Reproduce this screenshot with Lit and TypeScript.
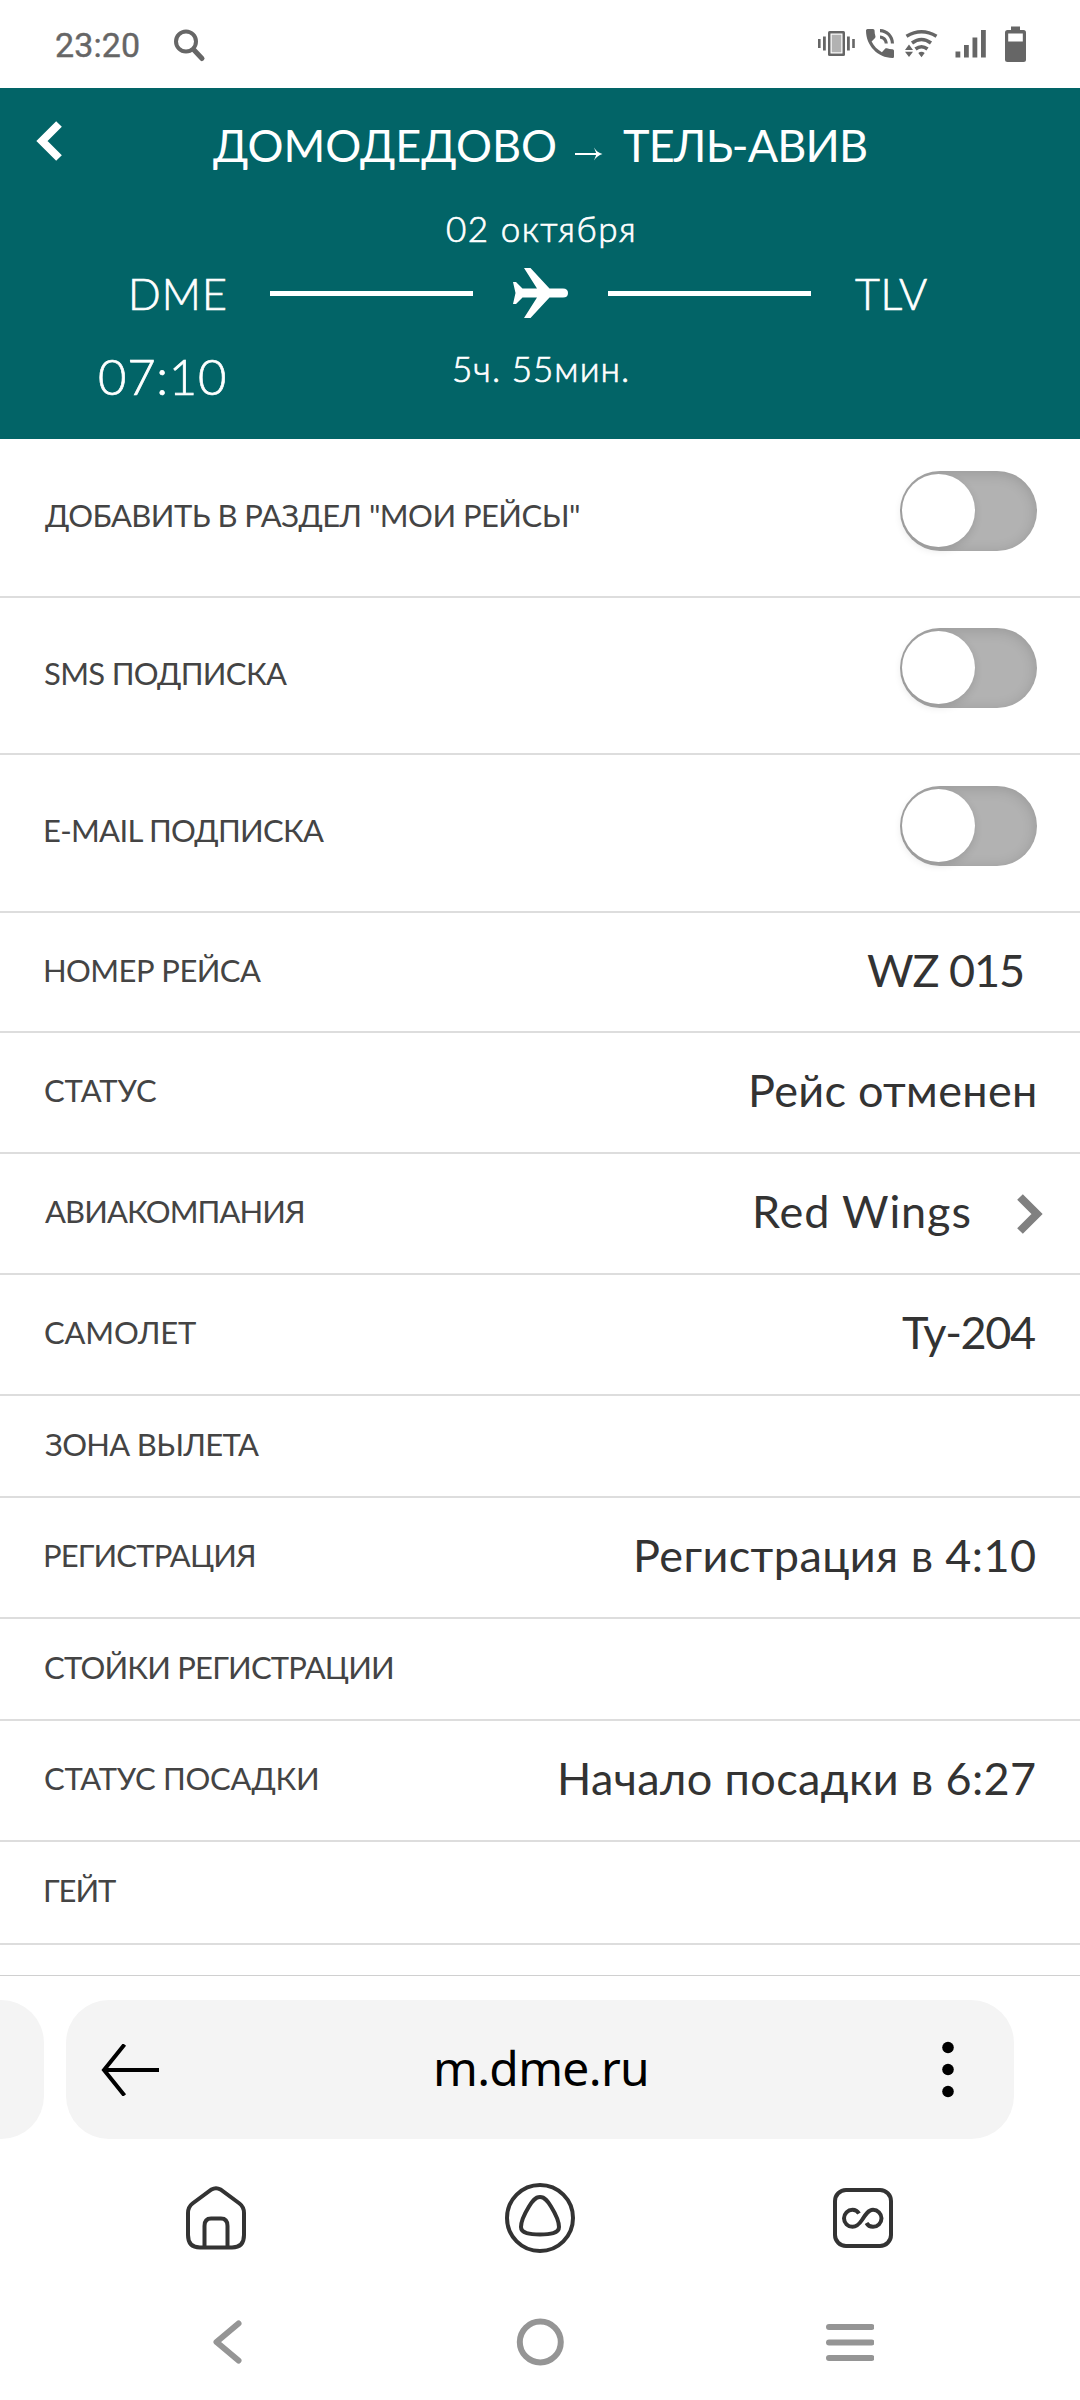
import { LitElement, html, css, svg, nothing } from "lit";
import { customElement, property } from "lit/decorators.js";

/** A single line of text whose letter spacing is tuned to span an exact width. */
@customElement("fit-text")
export class FitText extends LitElement {
  @property({ type: String }) text = "";
  @property({ type: Number }) span = 0;

  static styles = css`
    :host {
      display: block;
      flex: none;
      white-space: pre;
    }
    .line {
      display: block;
    }
  `;

  firstUpdated() {
    const line = this.renderRoot.querySelector<HTMLElement>(".line")!;
    const cs = getComputedStyle(this);
    const ctx = document.createElement("canvas").getContext("2d")!;
    ctx.font = `${cs.fontWeight} ${cs.fontSize} ${cs.fontFamily}`;
    const m = ctx.measureText(this.text);
    const ink = m.actualBoundingBoxLeft + m.actualBoundingBoxRight;
    line.style.letterSpacing = `${(this.span - ink) / (this.text.length - 1)}px`;
    line.style.marginLeft = `${m.actualBoundingBoxLeft}px`;
    this.style.width = `${this.span}px`;
  }

  render() {
    return html`<span class="line">${this.text}</span>`;
  }
}

const chevron = (dir: "left" | "right") => html`
  <svg width="26" height="40" viewBox="0 0 26 40" fill="none" stroke="currentColor" stroke-width="8">
    ${dir === "left" ? svg`<path d="M23 3 L6 20 L23 37" />` : svg`<path d="M3 3 L20 20 L3 37" />`}
  </svg>
`;

interface Row {
  label: string;
  labelSpan: number;
  value?: string;
  valueSpan?: number;
  kind: "toggle" | "tall" | "short";
  height: number;
  inset?: boolean;
  link?: boolean;
}

const ROWS: Row[] = [
  { label: 'ДОБАВИТЬ В РАЗДЕЛ "МОИ РЕЙСЫ"', labelSpan: 534, kind: "toggle", height: 159 },
  { label: "SMS ПОДПИСКА", labelSpan: 242, kind: "toggle", height: 157 },
  { label: "E-MAIL ПОДПИСКА", labelSpan: 280, kind: "toggle", height: 158 },
  { label: "НОМЕР РЕЙСА", labelSpan: 216, value: "WZ 015", valueSpan: 156, kind: "tall", height: 120, inset: true },
  { label: "СТАТУС", labelSpan: 112, value: "Рейс отменен", valueSpan: 283, kind: "tall", height: 121 },
  { label: "АВИАКОМПАНИЯ", labelSpan: 258, value: "Red Wings", valueSpan: 214, kind: "tall", height: 121, link: true },
  { label: "САМОЛЕТ", labelSpan: 151, value: "Ту-204", valueSpan: 133, kind: "tall", height: 121 },
  { label: "ЗОНА ВЫЛЕТА", labelSpan: 214, kind: "short", height: 102 },
  { label: "РЕГИСТРАЦИЯ", labelSpan: 209, value: "Регистрация в 4:10", valueSpan: 398, kind: "tall", height: 121 },
  { label: "СТОЙКИ РЕГИСТРАЦИИ", labelSpan: 347, kind: "short", height: 102 },
  { label: "СТАТУС ПОСАДКИ", labelSpan: 272, value: "Начало посадки в 6:27", valueSpan: 474, kind: "tall", height: 121 },
  { label: "ГЕЙТ", labelSpan: 71, kind: "short", height: 103 },
];

@customElement("app-root")
export class AppRoot extends LitElement {
  static styles = css`
    :host {
      display: flex;
      flex-direction: column;
      width: 1080px;
      height: 2400px;
      overflow: hidden;
      background: #fff;
      font-family: Lato, "Open Sans", sans-serif;
    }
    svg {
      display: block;
      flex: none;
    }

    .status {
      display: flex;
      box-sizing: border-box;
      height: 88px;
      padding: 0 54px 0 56px;
      color: #666;
    }
    .clock {
      font: 400 34px/40px Roboto, sans-serif;
      -webkit-text-stroke: 0.4px #666;
      margin-top: 25px;
    }
    .search {
      margin: 29px auto 0 35px;
    }
    .vibrate { margin: 31px 11px 0 0; }
    .phone { margin: 29px 11px 0 0; }
    .wifi { margin: 29px 16px 0 0; }
    .signal { margin: 29px 18px 0 0; }
    .battery { margin-top: 26px; }

    .flight {
      display: flex;
      flex-direction: column;
      box-sizing: border-box;
      height: 351px;
      background: #026467;
      color: #fff;
    }
    .topline {
      display: flex;
      height: 122px;
    }
    .back {
      margin: 33px 0 0 36px;
    }
    .title {
      display: flex;
      margin: 35px 0 0 151px;
      font-size: 45px;
      line-height: 44px;
    }
    .arrow {
      margin: 24px 20px 0 20px;
    }
    .small,
    .code,
    .depart {
      font-weight: 300;
      -webkit-text-stroke: 0.7px #fff;
    }
    .small {
      font-size: 35px;
      line-height: 36px;
      align-self: center;
    }
    .route {
      display: grid;
      grid-template-columns: 225px 45px 541px 44px auto;
      height: 69px;
      font-size: 43px;
      line-height: 44px;
    }
    .code {
      margin-top: 26px;
    }
    .from { justify-self: end; }
    .to { grid-column: 5; }
    .path {
      grid-column: 3;
      display: flex;
      justify-content: space-between;
      align-items: flex-start;
    }
    .rule {
      width: 203px;
      height: 5px;
      margin-top: 45px;
      background: #fff;
    }
    .plane {
      margin-top: 22px;
    }
    .times {
      display: grid;
      grid-template-columns: 225px 229px auto;
      height: 86px;
    }
    .depart {
      justify-self: end;
      font-size: 49px;
      line-height: 48px;
      margin-top: 37px;
    }
    .duration {
      grid-column: 3;
      align-self: start;
      margin-top: 35px;
    }

    .rows {
      height: 1536px;
      overflow: hidden;
      flex: none;
    }
    .row {
      display: flex;
      justify-content: space-between;
      align-items: flex-start;
      box-sizing: border-box;
      border-bottom: 2px solid #ddd;
      padding: 0 45px 0 45px;
    }
    .label {
      color: #444;
      font-size: 31px;
      line-height: 30px;
    }
    .toggle-row .label { margin-top: 60px; }
    .tall-row .label { margin-top: 42px; }
    .short-row .label { margin-top: 33px; }
    .value {
      color: #333;
      font-size: 45px;
      line-height: 44px;
      margin-top: 35px;
    }
    .inset { margin-right: 12px; }
    .linked {
      display: flex;
      margin-right: -8px;
      color: #808080;
    }
    .linked svg { margin: 40px 0 0 47px; }

    .toggle {
      box-sizing: border-box;
      width: 137px;
      height: 80px;
      margin: 31px -2px 0 0;
      padding: 3px 2px;
      border-radius: 40px;
      background: #b2b2b2;
      box-shadow: inset 0 2px 14px rgba(0, 0, 0, 0.15);
    }
    .row:nth-child(1) .label { margin-top: 61px; }
    .row:nth-child(1) .toggle { margin-top: 32px; }
    .row:nth-child(2) .toggle { margin-top: 30px; }
    .knob {
      width: 73px;
      height: 73px;
      border-radius: 50%;
      background: #fff;
      box-shadow: 0 3px 9px rgba(0, 0, 0, 0.12);
    }

    .browser {
      display: flex;
      gap: 22px;
      box-sizing: border-box;
      height: 164px;
      flex: none;
      padding-top: 24px;
      border-top: 1px solid #d0d0d0;
    }
    .prev {
      width: 44px;
      background: #f4f4f4;
      border-radius: 0 43px 43px 0;
    }
    .address {
      display: flex;
      box-sizing: border-box;
      width: 948px;
      padding: 0 60px 0 35px;
      background: #f4f4f4;
      border-radius: 43px;
      align-items: center;
      color: #000;
    }
    .host {
      font: 400 48px/60px "Noto Sans", sans-serif;
      margin: -4px 0 0 278px;
    }
    .dots { margin-left: auto; }
    .tools {
      display: flex;
      justify-content: space-between;
      align-items: center;
      height: 158px;
      padding: 0 187px 0 186px;
    }
    .nav {
      display: flex;
      align-items: center;
      height: 90px;
      padding-left: 212px;
    }
    .nav-home { margin: 0 260px 0 274px; }
  `;

  private statusBar() {
    return html`
      <div class="status">
        <fit-text class="clock" text="23:20" span="83"></fit-text>
        <svg class="search" width="32" height="34" viewBox="0 0 32 34" fill="none" stroke="#666" stroke-linecap="round">
          <circle cx="12" cy="12.5" r="10" stroke-width="4" />
          <path d="M20 21 L28 29.5" stroke-width="5" />
        </svg>
        <svg class="vibrate" width="37" height="25" viewBox="0 0 37 25" fill="#666">
          <rect x="0" y="8" width="2.6" height="9" />
          <rect x="5" y="5.5" width="2.8" height="14" />
          <rect x="29" y="5.5" width="2.8" height="14" />
          <rect x="34.2" y="8" width="2.6" height="9" />
          <rect x="10" y="0" width="17" height="25" rx="1.5" />
          <rect x="12.5" y="2.5" width="12" height="20" fill="#fff" />
          <rect x="13.7" y="3.7" width="9.6" height="17.6" fill="#b2b2b2" />
        </svg>
        <svg class="phone" width="28" height="29" viewBox="3 3 18 18" preserveAspectRatio="none" fill="#666">
          <path d="M20 15.5c-1.25 0-2.45-.2-3.57-.57-.35-.11-.74-.03-1.02.24l-2.2 2.2c-2.83-1.44-5.15-3.75-6.59-6.58l2.2-2.21c.28-.27.36-.66.25-1.01C8.7 6.45 8.5 5.25 8.5 4c0-.55-.45-1-1-1H4c-.55 0-1 .45-1 1 0 9.39 7.61 17 17 17 .55 0 1-.45 1-1v-3.5c0-.55-.45-1-1-1zM19 12h2c0-4.97-4.03-9-9-9v2c3.87 0 7 3.13 7 7zm-4 0h2c0-2.76-2.24-5-5-5v2c1.66 0 3 1.34 3 3z" />
        </svg>
        <svg class="wifi" width="34" height="29" viewBox="0 0 34 29" fill="#666">
          <g fill="none" stroke="#666" stroke-width="3.6">
            <path d="M1.5 7.2 Q16.5 -1.6 31.5 7.2" />
            <path d="M7 14 Q16.5 7 26 14" />
            <path d="M10.5 20 Q16.5 15.5 22.5 20" />
          </g>
          <path d="M4 15.5 L8 21 H0 Z M0 22.8 H8 L4 28 Z M13.3 24 Q16.5 21.5 19.7 24 L16.5 28.3 Z" />
        </svg>
        <svg class="signal" width="32" height="30" viewBox="0 0 32 30" fill="#666">
          <rect x="0.5" y="22.5" width="4.8" height="6" />
          <rect x="9" y="16" width="4.8" height="12.5" />
          <rect x="17.5" y="8.5" width="4.8" height="20" />
          <rect x="26" y="1" width="4.8" height="27.5" />
        </svg>
        <svg class="battery" width="21" height="36" viewBox="0 0 21 36">
          <rect x="6" y="0.5" width="9" height="6" fill="#666" />
          <rect x="0" y="4" width="21" height="32" rx="2.5" fill="#666" />
          <rect x="3.2" y="7.5" width="14.6" height="8" fill="#fff" />
        </svg>
      </div>
    `;
  }

  private flightHeader() {
    return html`
      <div class="flight">
        <div class="topline">
          <div class="back">${chevron("left")}</div>
          <div class="title">
            <fit-text text="ДОМОДЕДОВО" span="342"></fit-text>
            <svg class="arrow" width="28" height="14" viewBox="0 0 28 14">
              <path d="M0 7 H25" stroke="#fff" stroke-width="2" />
              <path d="M19 0.5 Q22 5.5 27.5 7 Q22 8.5 19 13.5 L21.5 7 Z" fill="#fff" />
            </svg>
            <fit-text text="ТЕЛЬ-АВИВ" span="243"></fit-text>
          </div>
        </div>
        <fit-text class="small date" text="02 октября" span="186"></fit-text>
        <div class="route">
          <fit-text class="code from" text="DME" span="93"></fit-text>
          <div class="path">
            <div class="rule"></div>
            <svg class="plane" width="55" height="50" viewBox="0 0 55 50" fill="#fff">
              <path d="M0 14 H3 L9.5 20.5 H24 L11 0 H17.5 L36.5 20.5 H50 Q55 20.5 55 25 Q55 29.5 50 29.5 H36.5 L17.5 50 H11 L24 29.5 H9.5 L3 36 H0 L2.5 25 Z" />
            </svg>
            <div class="rule"></div>
          </div>
          <fit-text class="code to" text="TLV" span="72"></fit-text>
        </div>
        <div class="times">
          <fit-text class="depart" text="07:10" span="126"></fit-text>
          <fit-text class="small duration" text="5ч. 55мин." span="173"></fit-text>
        </div>
      </div>
    `;
  }

  private row(r: Row) {
    const value = r.value
      ? html`<fit-text class="value ${r.inset ? "inset" : ""}" text=${r.value} span=${r.valueSpan ?? 0}></fit-text>`
      : nothing;
    return html`
      <div class="row ${r.kind}-row" style="height:${r.height}px">
        <fit-text class="label" text=${r.label} span=${r.labelSpan}></fit-text>
        ${r.kind === "toggle" ? html`<div class="toggle"><div class="knob"></div></div>` : nothing}
        ${r.link ? html`<div class="linked">${value}${chevron("right")}</div>` : value}
      </div>
    `;
  }

  private browserBar() {
    return html`
      <div class="browser">
        <div class="prev"></div>
        <div class="address">
          <svg width="58" height="52" viewBox="0 0 58 52" fill="none" stroke="#000" stroke-width="4">
            <path d="M3 26 H58 M23.5 0.5 L3 26 L23.5 51.5" />
          </svg>
          <fit-text class="host" text="m.dme.ru" span="209"></fit-text>
          <svg class="dots" width="12" height="58" viewBox="0 0 12 58">
            <circle cx="6" cy="6.5" r="5.8" />
            <circle cx="6" cy="28.5" r="5.8" />
            <circle cx="6" cy="50.5" r="5.8" />
          </svg>
        </div>
      </div>
      <div class="tools">
        <svg width="60" height="64" viewBox="0 0 60 64" fill="none" stroke="#333" stroke-width="4">
          <path d="M25.5 3.5 Q30 0.8 34.5 3.5 L53.5 17.5 Q58 21 58 27 V49 Q58 61.5 46 61.5 H14 Q2 61.5 2 49 V27 Q2 21 6.5 17.5 Z" />
          <path d="M18.5 61 V40 Q18.5 32.5 25 32.5 H35 Q41.5 32.5 41.5 40 V61" />
        </svg>
        <svg width="70" height="70" viewBox="0 0 70 70" fill="none" stroke="#333" stroke-width="4">
          <circle cx="35" cy="35" r="33" />
          <path d="M35 14 C30 14 27 18.5 24 23.5 C20 30 16 38 16 44 C16 50.5 25 51.5 35 51.5 C45 51.5 54 50.5 54 44 C54 38 50 30 46 23.5 C43 18.5 40 14 35 14 Z" />
        </svg>
        <svg width="60" height="60" viewBox="0 0 60 60" fill="none" stroke="#333" stroke-width="4">
          <rect x="2" y="2" width="56" height="56" rx="11" />
          <path d="M26 25.5 C24.5 23 22 21.8 19.5 21.8 A8.5 8.5 0 1 0 19.5 38.8 C23.5 38.8 26 36.5 29 32 C32.5 26.5 35.5 21.8 40 21.8 A8.5 8.5 0 1 1 40 38.8 C37 38.8 34.8 37.5 33.5 35" />
        </svg>
      </div>
      <div class="nav">
        <svg width="30" height="44" viewBox="0 0 30 44" fill="none" stroke="#959595" stroke-width="6" stroke-linecap="round" stroke-linejoin="round">
          <path d="M26.5 3.5 L4.5 22 L26.5 40.5" />
        </svg>
        <svg class="nav-home" width="48" height="48" viewBox="0 0 48 48" fill="none" stroke="#959595" stroke-width="6">
          <circle cx="24.3" cy="24" r="20.5" />
        </svg>
        <svg width="50" height="44" viewBox="0 0 50 44" fill="none" stroke="#959595" stroke-width="6" stroke-linecap="round">
          <path d="M5 7 H47.500 M5 22.500 H47.500 M5 38 H47.500" />
        </svg>
      </div>
    `;
  }

  render() {
    return html`
      ${this.statusBar()} ${this.flightHeader()}
      <div class="rows">${ROWS.map((r) => this.row(r))}</div>
      ${this.browserBar()}
    `;
  }
}
